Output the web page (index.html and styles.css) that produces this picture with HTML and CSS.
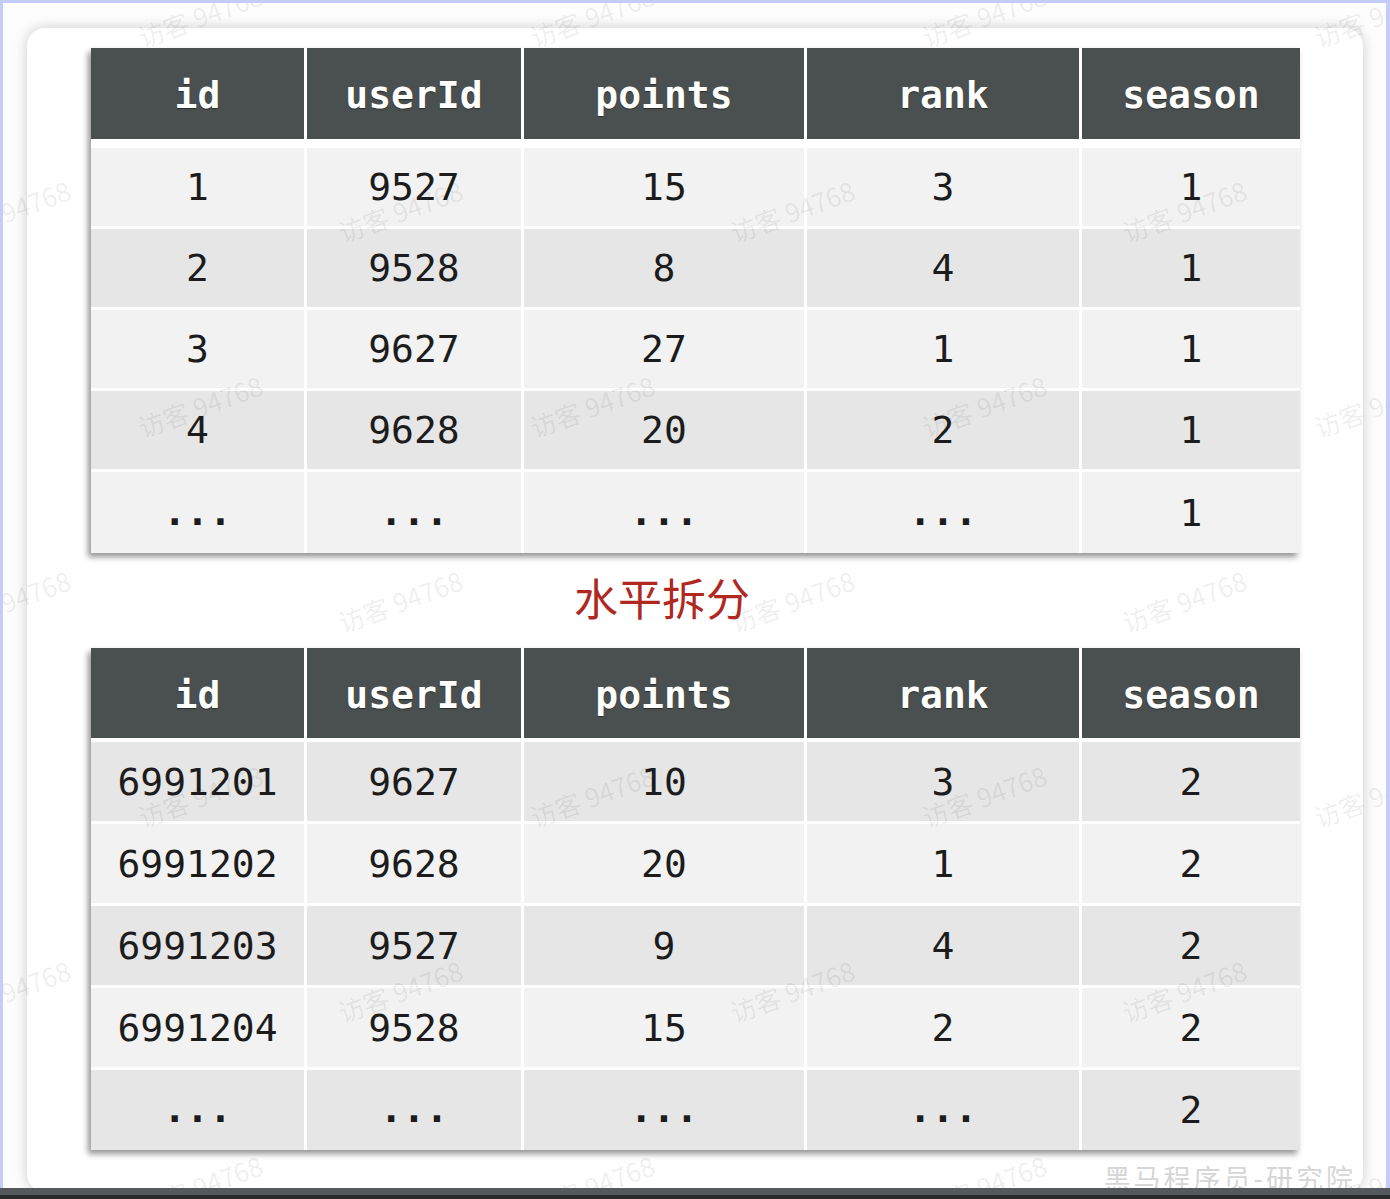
FILE: index.html
```html
<!DOCTYPE html>
<html lang="zh">
<head>
<meta charset="utf-8">
<title>水平拆分</title>
<link rel="stylesheet" href="styles.css">
</head>
<body>
<div class="frame">
  <div class="card">
    <div class="tbl tbl-top">
      <div class="th">id</div><div class="th">userId</div><div class="th">points</div><div class="th">rank</div><div class="th">season</div>
      <div class="td l">1</div><div class="td l">9527</div><div class="td l">15</div><div class="td l">3</div><div class="td l">1</div>
      <div class="td d">2</div><div class="td d">9528</div><div class="td d">8</div><div class="td d">4</div><div class="td d">1</div>
      <div class="td l">3</div><div class="td l">9627</div><div class="td l">27</div><div class="td l">1</div><div class="td l">1</div>
      <div class="td d">4</div><div class="td d">9628</div><div class="td d">20</div><div class="td d">2</div><div class="td d">1</div>
      <div class="td l dots">...</div><div class="td l dots">...</div><div class="td l dots">...</div><div class="td l dots">...</div><div class="td l">1</div>
    </div>
    <div class="caption">水平拆分</div>
    <div class="tbl tbl-bottom">
      <div class="th">id</div><div class="th">userId</div><div class="th">points</div><div class="th">rank</div><div class="th">season</div>
      <div class="td d">6991201</div><div class="td d">9627</div><div class="td d">10</div><div class="td d">3</div><div class="td d">2</div>
      <div class="td l">6991202</div><div class="td l">9628</div><div class="td l">20</div><div class="td l">1</div><div class="td l">2</div>
      <div class="td d">6991203</div><div class="td d">9527</div><div class="td d">9</div><div class="td d">4</div><div class="td d">2</div>
      <div class="td l">6991204</div><div class="td l">9528</div><div class="td l">15</div><div class="td l">2</div><div class="td l">2</div>
      <div class="td d dots">...</div><div class="td d dots">...</div><div class="td d dots">...</div><div class="td d dots">...</div><div class="td d">2</div>
    </div>
  </div>

  <div class="wm" aria-hidden="true">
    <div class="wm-row even"><span class="wi"><span>访客 94768</span></span><span class="wi"><span>访客 94768</span></span><span class="wi"><span>访客 94768</span></span><span class="wi"><span>访客 94768</span></span></div>
    <div class="wm-row odd"><span class="wi"><span>访客 94768</span></span><span class="wi"><span>访客 94768</span></span><span class="wi"><span>访客 94768</span></span><span class="wi"><span>访客 94768</span></span><span class="wi"><span>访客 94768</span></span></div>
    <div class="wm-row even"><span class="wi"><span>访客 94768</span></span><span class="wi"><span>访客 94768</span></span><span class="wi"><span>访客 94768</span></span><span class="wi"><span>访客 94768</span></span></div>
    <div class="wm-row odd"><span class="wi"><span>访客 94768</span></span><span class="wi"><span>访客 94768</span></span><span class="wi"><span>访客 94768</span></span><span class="wi"><span>访客 94768</span></span><span class="wi"><span>访客 94768</span></span></div>
    <div class="wm-row even"><span class="wi"><span>访客 94768</span></span><span class="wi"><span>访客 94768</span></span><span class="wi"><span>访客 94768</span></span><span class="wi"><span>访客 94768</span></span></div>
    <div class="wm-row odd"><span class="wi"><span>访客 94768</span></span><span class="wi"><span>访客 94768</span></span><span class="wi"><span>访客 94768</span></span><span class="wi"><span>访客 94768</span></span><span class="wi"><span>访客 94768</span></span></div>
    <div class="wm-row even"><span class="wi"><span>访客 94768</span></span><span class="wi"><span>访客 94768</span></span><span class="wi"><span>访客 94768</span></span><span class="wi"><span>访客 94768</span></span></div>
  </div>
  <div class="brand">黑马程序员-研究院</div>
</div>
<div class="bar"></div>
</body>
</html>
```

FILE: styles.css
```css
html, body {
  margin: 0;
  padding: 0;
  background: #ffffff;
}

.frame {
  box-sizing: border-box;
  position: relative;
  height: 1188px;
  width: 1390px;
  border: 3px solid #c4ccfb;
  border-right-width: 4px;
  border-bottom: 0;
  padding: 25px 23px 0 24px;
  background: #fdfdfd;
  overflow: hidden;
}

.card {
  background: #ffffff;
  border-radius: 18px;
  box-shadow: 0 0 14px rgba(0, 0, 0, 0.2);
  padding: 20px 63px 42px 64px;
}

.tbl {
  display: grid;
  grid-template-columns: 213px 214px 280px 272px 218px;
  column-gap: 3px;
  row-gap: 3px;
  background: #ffffff;
  box-shadow: -3px 4px 6px rgba(0, 0, 0, 0.42);
}

.tbl-top {
  grid-template-rows: auto repeat(4, 78px) 81px;
}

.tbl-bottom {
  grid-template-rows: auto repeat(4, 79px) 80px;
}

.th {
  height: 91px;
  background: #4a4f4f;
  color: #ffffff;
  font-family: "DejaVu Sans Mono", "Liberation Mono", monospace;
  font-weight: bold;
  font-size: 38px;
  display: flex;
  align-items: center;
  justify-content: center;
  padding-top: 3px;
  box-sizing: border-box;
  text-shadow: 0 1px 1px rgba(0, 0, 0, 0.45);
}

.tbl-top .th {
  margin-bottom: 6px;
}

.tbl-bottom .th {
  height: 90px;
  margin-bottom: 1px;
}

.td {
  display: flex;
  align-items: center;
  justify-content: center;
  font-family: "DejaVu Sans Mono", "Liberation Mono", monospace;
  font-size: 38px;
  color: #1c1c1c;
}

.td.l { background: #f2f2f2; }
.td.d { background: #e6e6e6; }

.td.dots {
  font-weight: bold;
  padding-bottom: 2px;
  box-sizing: border-box;
}

.caption {
  height: 95px;
  padding-left: 483px;
  font-family: "Noto Sans CJK SC", "Noto Sans", sans-serif;
  font-size: 44px;
  line-height: 88px;
  color: #b0281f;
}

.wm {
  position: absolute;
  top: -85px;
  left: 0;
  width: 1600px;
  pointer-events: none;
}

.wm-row {
  display: flex;
  height: 195px;
}

.wm-row.even { margin-left: 1px; }
.wm-row.odd { margin-left: -191px; }

.wi {
  flex: 0 0 392px;
  display: flex;
  align-items: center;
  justify-content: center;
}

.wi span {
  display: inline-block;
  transform: rotate(-20deg);
  font-family: "Noto Sans CJK SC", "Noto Sans", sans-serif;
  font-size: 26px;
  color: rgba(0, 0, 0, 0.075);
  white-space: nowrap;
}

.brand {
  position: absolute;
  right: 30px;
  bottom: -9px;
  font-family: "Noto Sans CJK SC", sans-serif;
  font-size: 27px;
  color: #d6d6d6;
  letter-spacing: 3px;
}

.bar {
  height: 11px;
  background: linear-gradient(#55585d 0, #55585d 65%, #2b2b2b 65%, #2b2b2b 100%);
}
```
